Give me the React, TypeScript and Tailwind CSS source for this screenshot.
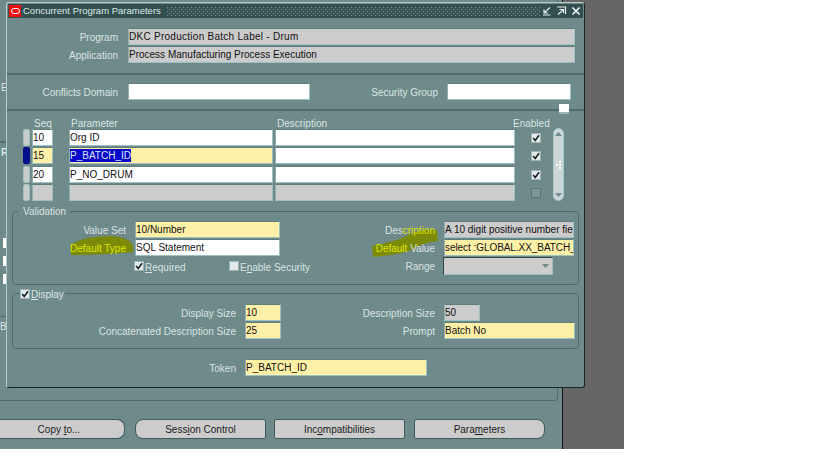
import React from "react";

const fieldBase = "h-[17px] flex items-center text-[#111] overflow-hidden whitespace-nowrap border border-[#9dc0c0] border-t-[#5f7d7d] border-l-[#8fb0b0] shrink-0";
const white = "bg-white";
const yellow = "bg-[#fff0a8]";
const grey = "bg-[#cccccc]";

function Field({ w, tone, children, className = "" }: { w: string; tone: string; children?: React.ReactNode; className?: string }) {
  return <div className={`${fieldBase} ${w} ${tone} ${className}`}>{children}</div>;
}

function Check({ on = false, disabled = false }: { on?: boolean; disabled?: boolean }) {
  return (
    <div className={`w-[10px] h-[10px] shrink-0 flex items-center justify-center border ${disabled ? "bg-[#7d9797] border-[#5a7474]" : "bg-[#e4e8e8] border-[#9bb3b3]"}`}>
      {on && (
        <svg viewBox="0 0 10 10" className="w-[10px] h-[10px]">
          <path d="M1.5 5 L4 8 L8.8 1.5" fill="none" stroke="#0d1d1d" strokeWidth="1.9" />
        </svg>
      )}
    </div>
  );
}

function Indicator({ active = false }: { active?: boolean }) {
  return <div className={`w-[7px] h-[17px] rounded-[2px] border ${active ? "bg-[#00108a] border-[#00108a]" : "bg-[#c6cccc] border-[#9dc0c0]"}`} />;
}

function TitleIcons() {
  return (
    <div className="flex items-center gap-[3px] pr-[2px]">
      <svg viewBox="0 0 11 10" className="w-[11px] h-[10px]">
        <path d="M2 9H9.5M9 1.5L3.5 6.5M3 3.5V7H7" fill="none" stroke="#e6eeee" strokeWidth="1.2" />
      </svg>
      <svg viewBox="0 0 11 10" className="w-[11px] h-[10px] ml-[1px]">
        <path d="M1 1H9.5V8M2 8.5L7.5 3.5M3.5 3.5H7.5V7" fill="none" stroke="#e6eeee" strokeWidth="1.2" />
      </svg>
      <svg viewBox="0 0 10 10" className="w-[10px] h-[10px] ml-[1px]">
        <path d="M1.5 1.5L8.5 8.5M8.5 1.5L1.5 8.5" fill="none" stroke="#eef4f4" strokeWidth="1.7" />
      </svg>
    </div>
  );
}

const rows = [
  { seq: "10", p: "Org ID", tone: white, on: true },
  { seq: "15", p: "P_BATCH_ID", tone: yellow, on: true, active: true },
  { seq: "20", p: "P_NO_DRUM", tone: white, on: true },
  { seq: "", p: "", tone: grey, on: false, empty: true },
];

function Modal() {
  return (
    <div className="absolute left-[6px] top-[2px] w-[579px] h-[386px] bg-[#6f8a8a] border-l border-t border-[#b4cccc] border-r-[#16262a] border-b-[#16262a] border-r border-b rounded-[3px] text-[10px] text-[#dbe4e4]">
      <svg viewBox="7 3 577 384" className="absolute left-0 top-0 w-[577px] h-[384px]">
        <path d="M71 255 L71 245 C78 239 95 236 112 236 C124 237 132 241 133 246 L133 252 C115 254 90 255 71 255Z" fill="#7b8a08" />
        <path d="M372 246 C385 243 400 240 408 235 C418 230 428 229 437 230 L438 241 C428 242 420 245 412 250 C400 254 386 256 373 257Z" fill="#7b8a08" />
      </svg>

      <div className="relative flex flex-col h-full">
        <div className="h-[14px] mx-[1px] mt-[1px] bg-[#335050] flex items-center">
          <div className="w-[12px] h-[12px] ml-[1px] bg-[#f01010] flex items-center justify-center shrink-0">
            <div className="w-[9px] h-[6px] rounded-[3px] border-[1.5px] border-white" />
          </div>
          <span className="ml-[2px] text-[9.5px] text-[#dfe8e8] whitespace-nowrap w-[144px] shrink-0">Concurrent Program Parameters</span>
          <svg className="flex-1 h-[9px] min-w-0">
            <defs>
              <pattern id="dots" width="4" height="4" patternUnits="userSpaceOnUse">
                <rect x="0" y="0" width="1.2" height="1.2" fill="#6f9090" />
                <rect x="2" y="2" width="1.2" height="1.2" fill="#6f9090" />
              </pattern>
            </defs>
            <rect width="100%" height="100%" fill="url(#dots)" />
          </svg>
          <TitleIcons />
        </div>

        <div className="flex mt-[10px] items-center">
          <div className="w-[111px] text-right mr-[10px] pt-[1px]">Program</div>
          <Field w="w-[447px]" tone={grey} className="tracking-[0.27px]">DKC Production Batch Label - Drum</Field>
        </div>
        <div className="flex mt-[1px] items-center">
          <div className="w-[111px] text-right mr-[10px] pt-[1px]">Application</div>
          <Field w="w-[447px]" tone={grey}>Process Manufacturing Process Execution</Field>
        </div>

        <div className="h-[2px] bg-[#4f6c6c] mt-[10px]" />

        <div className="flex mt-[8px] items-center">
          <div className="w-[111px] text-right mr-[10px] pt-[1px]">Conflicts Domain</div>
          <Field w="w-[182px]" tone={white} />
          <div className="w-[128px] text-right mr-[9px] pt-[1px]">Security Group</div>
          <Field w="w-[124px]" tone={white} />
        </div>

        <div className="relative h-[2px] bg-[#4f6c6c] mt-[9px]">
          <div className="absolute left-[552px] -top-[5px] w-[10px] h-[10px] bg-white border-b-2 border-[#9db5b5]" />
        </div>

        <div className="flex mt-[5px] ml-[16px]">
          <div className="flex flex-col w-[518px]">
            <div className="flex h-[14px] items-center">
              <div className="w-[10px]" />
              <div className="w-[20px] text-center">Seq</div>
              <div className="w-[16px]" />
              <div className="w-[206px] pl-[2px]">Parameter</div>
              <div className="w-[240px] pl-[2px]">Description</div>
              <div className="w-[26px] whitespace-nowrap -ml-[2px]">Enabled</div>
            </div>
            <div className="flex flex-col gap-[1px] mt-[-1px]">
              {rows.map((r, i) => (
                <div key={i} className={`flex items-center ${i === 2 ? "mt-[1px]" : ""}`}>
                  <Indicator active={r.active} />
                  <Field w="w-[21px] ml-[2px]" tone={r.tone}>{r.seq}</Field>
                  <Field w="w-[204px] ml-[16px]" tone={r.tone}>
                    {r.active ? <span className="bg-[#0606c8] text-[#dfe8ff] h-[13px] leading-[13px]">{r.p}</span> : r.p}
                  </Field>
                  <Field w="w-[240px] ml-[2px]" tone={r.empty ? grey : white} />
                  <div className="ml-[16px]"><Check on={r.on} disabled={r.empty} /></div>
                </div>
              ))}
            </div>
          </div>
          <div className="w-[11px] h-[73px] mt-[12px] ml-[12px] rounded-full bg-[#cdd6d6] border border-[#a6cccc] flex flex-col items-center justify-between py-[3px]">
            <svg viewBox="0 0 7 4" className="w-[7px] h-[4px]"><path d="M3.5 0L7 4H0Z" fill="#6f8a8a" /></svg>
            <div className="grid grid-cols-2 gap-[1px]">
              <span className="w-[2px] h-[2px]" /><span className="w-[2px] h-[2px] bg-white" />
              <span className="w-[2px] h-[2px] bg-white" /><span className="w-[2px] h-[2px] bg-white" />
              <span className="w-[2px] h-[2px]" /><span className="w-[2px] h-[2px] bg-white" />
            </div>
            <svg viewBox="0 0 7 4" className="w-[7px] h-[4px]"><path d="M0 0H7L3.5 4Z" fill="#6f8a8a" /></svg>
          </div>
        </div>

        <div className="relative mt-[10px] mx-[5px] h-[74px] border border-[#4f6c6c] rounded-[4px] pt-[9px]">
          <div className="absolute left-[6px] -top-[6px] bg-[#6f8a8a] px-[4px] h-[12px] leading-[12px]">Validation</div>
          <div className="flex items-center">
            <div className="w-[113px] text-right mr-[9px] pt-[1px]">Value Set</div>
            <Field w="w-[145px]" tone={yellow}>10/Number</Field>
            <div className="w-[155px] text-right mr-[9px] pt-[1px]">Des<span className="text-[#dfe600]">cription</span></div>
            <Field w="w-[130px]" tone={grey}>A 10 digit positive number fie</Field>
          </div>
          <div className="flex items-center mt-[1px]">
            <div className="w-[113px] text-right mr-[9px] text-[#dfe600] pt-[1px]">Default Type</div>
            <Field w="w-[145px]" tone={white}>SQL Statement</Field>
            <div className="w-[155px] text-right mr-[9px] pt-[1px]"><span className="text-[#dfe600]">Default</span> Value</div>
            <Field w="w-[130px]" tone={yellow} className="tracking-[-0.06px]">select :GLOBAL.XX_BATCH_</Field>
          </div>
          <div className="flex items-center mt-[1px] h-[18px]">
            <div className="w-[121px]" />
            <Check on />
            <div className="ml-[1px] w-[84px] pt-[2px]"><span className="underline">R</span>equired</div>
            <Check />
            <div className="ml-[1px] w-[102px] whitespace-nowrap pt-[2px]">E<span className="underline">n</span>able Security</div>
            <div className="w-[93px] text-right mr-[8px] pt-[1px]">Range</div>
            <div className="w-[110px] h-[18px] bg-[#cccccc] border border-[#9dc0c0] border-l-[#2e4444] border-t-[#2e4444] flex items-center justify-end pr-[3px]">
              <svg viewBox="0 0 7 4" className="w-[7px] h-[4px]"><path d="M0 0H7L3.5 4Z" fill="#6f8a8a" /></svg>
            </div>
          </div>
        </div>

        <div className="relative mt-[8px] mx-[5px] h-[56px] border border-[#4f6c6c] rounded-[4px] pt-[10px]">
          <div className="absolute left-[6px] -top-[6px] bg-[#6f8a8a] pl-[1px] pr-[1px] h-[12px] flex items-center gap-[0px]">
            <Check on />
            <span className="ml-[1px]"><span className="underline">D</span>isplay</span>
          </div>
          <div className="flex items-center">
            <div className="w-[223px] text-right mr-[9px] pt-[1px]">Display Size</div>
            <Field w="w-[36px]" tone={yellow}>10</Field>
            <div className="w-[154px] text-right mr-[9px] pt-[1px]">Description Size</div>
            <Field w="w-[36px]" tone={grey}>50</Field>
          </div>
          <div className="flex items-center mt-[1px]">
            <div className="w-[223px] text-right mr-[9px] pt-[1px]">Concatenated Description Size</div>
            <Field w="w-[36px]" tone={yellow}>25</Field>
            <div className="w-[154px] text-right mr-[9px] pt-[1px]">Prompt</div>
            <Field w="w-[131px]" tone={yellow}>Batch No</Field>
          </div>
        </div>

        <div className="flex items-center mt-[10px]">
          <div className="w-[229px] text-right mr-[9px] pt-[1px]">Token</div>
          <Field w="w-[182px]" tone={yellow}>P_BATCH_ID</Field>
        </div>
      </div>
    </div>
  );
}

function Btn({ w, r, children }: { w: string; r: string; children: React.ReactNode }) {
  return <div className={`${w} ${r} h-[20px] bg-[#cccccc] border border-[#3f5a5a] flex items-center justify-center text-[#1c1c1c] text-[10px]`}>{children}</div>;
}

export default function App() {
  return (
    <div className="w-[819px] h-[460px] bg-white" style={{ fontFamily: '"Liberation Sans", Arial, sans-serif' }}>
      <div className="relative w-[624px] h-[449px] bg-[#666666] flex">
        <div className="w-[563px] h-[449px] bg-[#6f8a8a] border-r border-[#141414] flex flex-col">
          <div className="h-[401px] w-[558px] border-b border-r border-[#4f6c6c] rounded-br-[4px] text-[10px] text-[#dbe4e4] flex flex-col overflow-hidden">
            <div className="mt-[82px] h-[12px] leading-[12px] pl-[1px]">E</div>
            <div className="mt-[47px] h-[2px] w-[6px] bg-[#4f6c6c]" />
            <div className="mt-[4px] h-[12px] leading-[12px] pl-[1px] font-bold">R</div>
            <div className="mt-[79px] ml-[3px] w-[4px] h-[10px] bg-white" />
            <div className="mt-[8px] ml-[3px] w-[4px] h-[10px] bg-white" />
            <div className="mt-[8px] ml-[3px] w-[4px] h-[10px] bg-white" />
            <div className="mt-[32px] h-[1px] w-[6px] bg-[#4f6c6c]" />
            <div className="mt-[4px] h-[12px] leading-[12px]">B</div>
          </div>
          <div className="flex mt-[18px]">
            <Btn w="w-[125px] pr-[6px]" r="rounded-r-[8px] border-l-0"><span>Copy <span className="underline">t</span>o...</span></Btn>
            <Btn w="w-[131px] ml-[10px]" r="rounded-l-[8px] rounded-r-[2px]"><span>Sess<span className="underline">i</span>on Control</span></Btn>
            <Btn w="w-[131px] ml-[8px]" r="rounded-[2px]"><span>Inc<span className="underline">o</span>mpatibilities</span></Btn>
            <Btn w="w-[131px] ml-[9px]" r="rounded-l-[2px] rounded-r-[8px]"><span>Para<span className="underline">m</span>eters</span></Btn>
          </div>
        </div>
        <Modal />
      </div>
    </div>
  );
}
